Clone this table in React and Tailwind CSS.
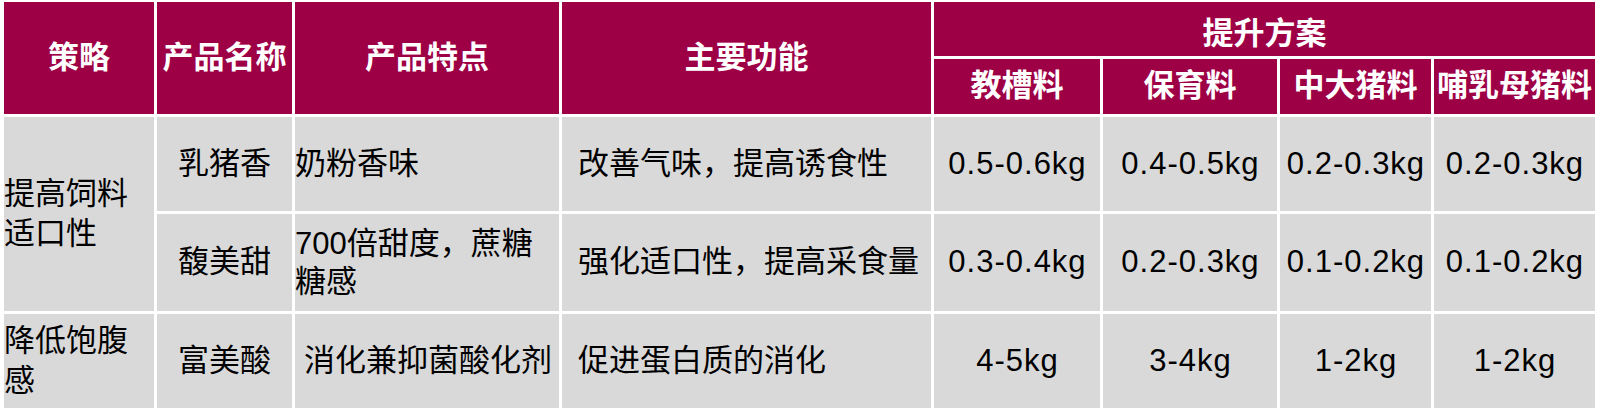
const FONT = { fontFamily: '"Liberation Sans", "Noto Sans CJK SC", sans-serif' }

const STAGES = ['教槽料', '保育料', '中大猪料', '哺乳母猪料']

const ROWS = [
  {
    name: '乳猪香',
    feature: '奶粉香味',
    func: '改善气味，提高诱食性',
    doses: ['0.5-0.6kg', '0.4-0.5kg', '0.2-0.3kg', '0.2-0.3kg'],
  },
  {
    name: '馥美甜',
    feature: '700倍甜度，蔗糖糖感',
    func: '强化适口性，提高采食量',
    doses: ['0.3-0.4kg', '0.2-0.3kg', '0.1-0.2kg', '0.1-0.2kg'],
  },
  {
    name: '富美酸',
    feature: '消化兼抑菌酸化剂',
    indent: true,
    func: '促进蛋白质的消化',
    doses: ['4-5kg', '3-4kg', '1-2kg', '1-2kg'],
  },
]

const head = 'bg-[#9e0046] text-white font-bold text-[31px] flex items-center justify-center whitespace-nowrap'
const cell = 'bg-[#d9d9d9] text-black text-[31px] flex items-center'

export default function App() {
  return (
    <div className="bg-white w-[1600px] h-[412px] pt-[2px] pl-[4px]" style={FONT}>
      <div className="grid grid-cols-[150px_135px_264px_369px_166px_174px_151px_161px] grid-rows-[54px_55px_94px_97px_94px] gap-[3px] w-[1591px]">
        <div className={`${head} row-span-2`}>策略</div>
        <div className={`${head} row-span-2`}>产品名称</div>
        <div className={`${head} row-span-2`}>产品特点</div>
        <div className={`${head} row-span-2`}>主要功能</div>
        <div className={`${head} col-span-4 pt-[10px]`}>提升方案</div>
        {STAGES.map(s => (
          <div key={s} className={head}>{s}</div>
        ))}

        <div className={`${cell} row-span-2 leading-[40px]`}>提高饲料<br />适口性</div>
        {ROWS.map((r, i) => (
          <Row key={r.name} row={r} first={i === 2} />
        ))}
      </div>
    </div>
  )
}

function Row({ row, first }) {
  return (
    <>
      {first && <div className={`${cell} leading-[40px]`}>降低饱腹<br />感</div>}
      <div className={`${cell} justify-center`}>{row.name}</div>
      <div className={`${cell} leading-[38px] ${row.indent ? 'pl-[9px]' : ''}`}>
        <div>{row.feature}</div>
      </div>
      <div className={`${cell} pl-[16px]`}>{row.func}</div>
      {row.doses.map((d, i) => (
        <div key={i} className={`${cell} justify-center whitespace-nowrap text-[30px] tracking-[1px]`}>
          <span className="mr-[-1px]">{d}</span>
        </div>
      ))}
    </>
  )
}
